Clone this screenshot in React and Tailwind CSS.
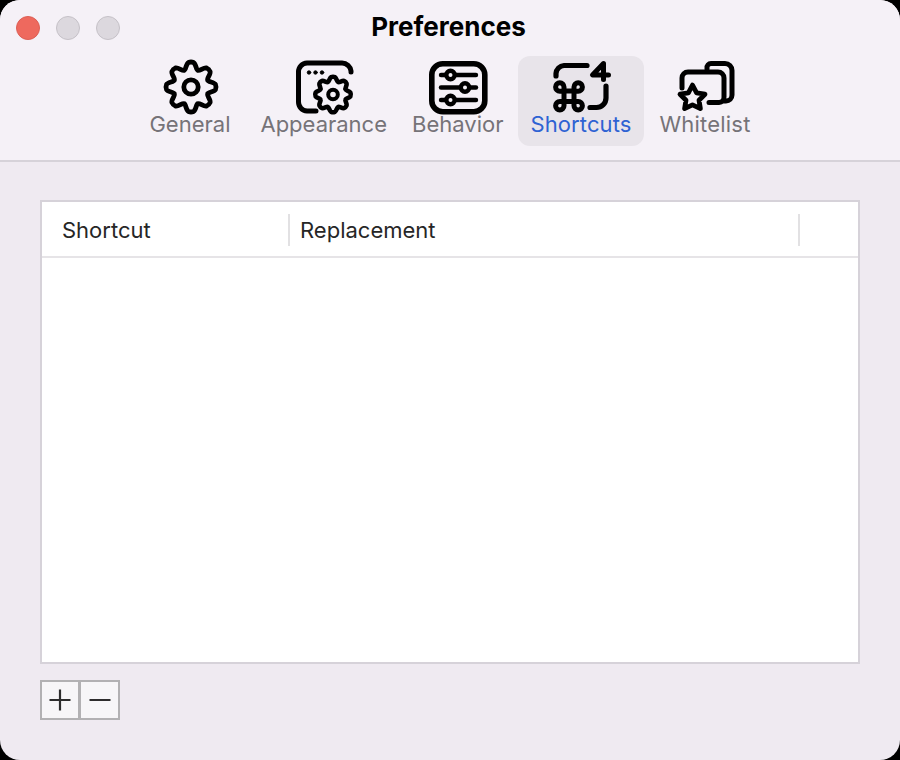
const gearPath = (cx, cy, rOut, rIn, n = 8) => {
  const step = (Math.PI * 2) / n;
  let d = "";
  for (let i = 0; i < n; i++) {
    const a = -Math.PI / 2 + i * step;
    const v = a + step / 2;
    const w = step * 0.24;
    const p = (r, t) => `${(cx + r * Math.cos(t)).toFixed(2)} ${(cy + r * Math.sin(t)).toFixed(2)}`;
    if (i === 0) d += `M${p(rIn, a - step / 2)}`;
    d += ` C${p(rIn * 1.0, a - step / 2 + step * 0.14)} ${p(rOut * 0.96, a - w * 1.15)} ${p(rOut, a - w * 0.55)}`;
    d += ` Q${p(rOut * 1.04, a)} ${p(rOut, a + w * 0.55)}`;
    d += ` C${p(rOut * 0.96, a + w * 1.15)} ${p(rIn * 1.0, v - step * 0.14)} ${p(rIn, v)}`;
  }
  return d + "Z";
};

const base = { fill: "none", stroke: "#000", strokeLinecap: "round", strokeLinejoin: "round" };

const GeneralIcon = () => (
  <svg width="60" height="60" viewBox="0 0 60 60" {...base} strokeWidth="4.8">
    <path d={gearPath(31, 29, 24.6, 18)} />
    <circle cx="31" cy="29" r="7.2" />
  </svg>
);

// viewBox in window coordinates around each icon
const AppearanceIcon = () => (
  <svg width="64" height="60" viewBox="291 58 64 60" {...base} strokeWidth="5">
    <path d="M350 72 V71 A9 9 0 0 0 341 63 H306 A9 9 0 0 0 297.5 72 V102 A9 9 0 0 0 306 111 H315" />
    <circle cx="308" cy="72.5" r="1.8" fill="#000" strokeWidth="0.8" />
    <circle cx="314.5" cy="72.5" r="1.8" fill="#000" strokeWidth="0.8" />
    <circle cx="321" cy="72.5" r="1.8" fill="#000" strokeWidth="0.8" />
    <path d={gearPath(332, 94.5, 17.5, 13.5)} strokeWidth="4.6" />
    <circle cx="332" cy="94.5" r="4.8" strokeWidth="4" />
  </svg>
);

const BehaviorIcon = () => (
  <svg width="64" height="60" viewBox="427 58 64 60" {...base} strokeWidth="5.6">
    <rect x="432.8" y="63.8" width="53" height="48" rx="11" />
    <g strokeWidth="4.4">
      <path d="M442 75 H477" />
      <path d="M442 87.5 H477" />
      <path d="M442 100 H477" />
    </g>
    <g fill="#f5f1f7" strokeWidth="4.4">
      <circle cx="451.5" cy="75" r="4.2" />
      <circle cx="466" cy="87.5" r="4.2" />
      <circle cx="451.5" cy="100" r="4.2" />
    </g>
  </svg>
);

const ShortcutsIcon = () => (
  <svg width="64" height="60" viewBox="550 58 64 60" {...base} strokeWidth="5.2">
    <path d="M588 65.5 H565 A8.5 8.5 0 0 0 557 73.5 V76" />
    <path d="M607 86 V98 A9.5 9.5 0 0 1 597 107.5 H591" />
    <path d="M604.5 79.5 V63.5 L593.5 75 H609.5" strokeWidth="5" />
    <path
      d="M565 91 H575 V101.5 H565 Z M565 91 V87 A4.2 4.2 0 1 0 560.8 91.2 H565 M575 91 V87 A4.2 4.2 0 1 1 579.2 91.2 H575 M565 101.5 V105.7 A4.2 4.2 0 1 1 560.8 101.5 H565 M575 101.5 V105.7 A4.2 4.2 0 1 0 579.2 101.5 H575"
      strokeWidth="5"
    />
  </svg>
);

const WhitelistIcon = () => (
  <svg width="64" height="60" viewBox="672 58 64 60" {...base} strokeWidth="5">
    <path d="M706 69 V68 A4 4 0 0 1 710 63.5 H724 A7 7 0 0 1 731 70.5 V95 A6 6 0 0 1 725 101 H723" />
    <path d="M681 88 V78 A6 6 0 0 1 687 72 H717 A6 6 0 0 1 723 78 V97 A5 5 0 0 1 718 102.5 H708" />
    <path
      d="M691.5 85 L695.6 92.8 L704 94.2 L698 100.2 L699.4 108.6 L691.5 104.8 L683.6 108.6 L685 100.2 L679 94.2 L687.4 92.8 Z"
      strokeWidth="4.8"
      fill="#f5f1f7"
    />
  </svg>
);

const tabs = [
  { label: "General", Icon: GeneralIcon, cls: "pr-[13px]", text: "" },
  { label: "Appearance", Icon: AppearanceIcon, cls: "ml-[3px] pr-[13px]", text: "" },
  { label: "Behavior", Icon: BehaviorIcon, cls: "-ml-[2px] pr-[13px]", text: "" },
  { label: "Shortcuts", Icon: ShortcutsIcon, cls: "pr-[13px]", text: "tracking-[0.1px]", active: true },
  { label: "Whitelist", Icon: WhitelistIcon, cls: "ml-[1px] pr-[12px]", text: "tracking-[0.2px]" },
];

export default function App() {
  return (
    <div className="w-[900px] h-[760px] bg-black overflow-hidden font-['Inter',sans-serif]">
      <div className="w-full h-full rounded-[20px] overflow-hidden bg-[#efeaf1] flex flex-col">
        <div className="h-[162px] shrink-0 bg-[#f5f1f7] border-b-2 border-[#d6d2d9] flex flex-col">
          <div className="grid grid-cols-[1fr_auto_1fr] items-center h-[56px] pl-4 pr-[19px]">
            <div className="flex items-center gap-4">
              <div className="w-6 h-6 rounded-full bg-[#ee695e] border border-[#dc5f55]" />
              <div className="w-6 h-6 rounded-full bg-[#dcd8de] border border-[#c5c1c7]" />
              <div className="w-6 h-6 rounded-full bg-[#dcd8de] border border-[#c5c1c7]" />
            </div>
            <div className="text-[26px] -mt-[4px] font-bold text-black">Preferences</div>
            <div />
          </div>
          <div className="flex justify-center items-start gap-[2px]">
            {tabs.map(({ label, Icon, active, cls, text }) => (
              <div
                key={label}
                className={`flex flex-col items-center h-[90px] pl-3 rounded-[12px] ${cls} ${active ? "bg-[#e8e4ea]" : ""}`}
              >
                <div className="h-[60px] mt-[2px] flex items-center justify-center overflow-visible">
                  <Icon />
                </div>
                <div
                  className={`text-[22px] leading-[28px] -mt-[8px] whitespace-nowrap ${text} ${active ? "text-[#2e62d3]" : "text-[#767378]"}`}
                >
                  {label}
                </div>
              </div>
            ))}
          </div>
        </div>

        <div className="flex-1 flex flex-col px-10 pt-[38px]">
          <div className="h-[464px] bg-white border-2 border-[#d6d2d9] flex flex-col">
            <div className="h-[56px] pt-[2px] border-b-2 border-[#e6e4e7] flex items-center shrink-0 text-[22px] text-[#262626]">
              <div className="w-[248px] h-[32px] pl-5 border-r-2 border-[#e2e1e3] flex items-center">Shortcut</div>
              <div className="w-[510px] h-[32px] pl-[10px] border-r-2 border-[#e2e1e3] flex items-center">Replacement</div>
              <div className="flex-1" />
            </div>
          </div>
          <div className="flex mt-4">
            <button className="w-10 h-10 bg-[#f7f6f8] border-2 border-[#b2b1b3] flex items-center justify-center">
              <svg width="24" height="24" viewBox="0 0 24 24" stroke="#2d2d2d" strokeWidth="2.2">
                <path d="M1.5 12 H22.5 M12 1.5 V22.5" />
              </svg>
            </button>
            <button className="w-10 h-10 bg-[#f7f6f8] border-2 border-l border-[#b2b1b3] flex items-center justify-center">
              <svg width="24" height="24" viewBox="0 0 24 24" stroke="#2d2d2d" strokeWidth="2.2">
                <path d="M1.5 12 H22.5" />
              </svg>
            </button>
          </div>
        </div>
      </div>
    </div>
  );
}
